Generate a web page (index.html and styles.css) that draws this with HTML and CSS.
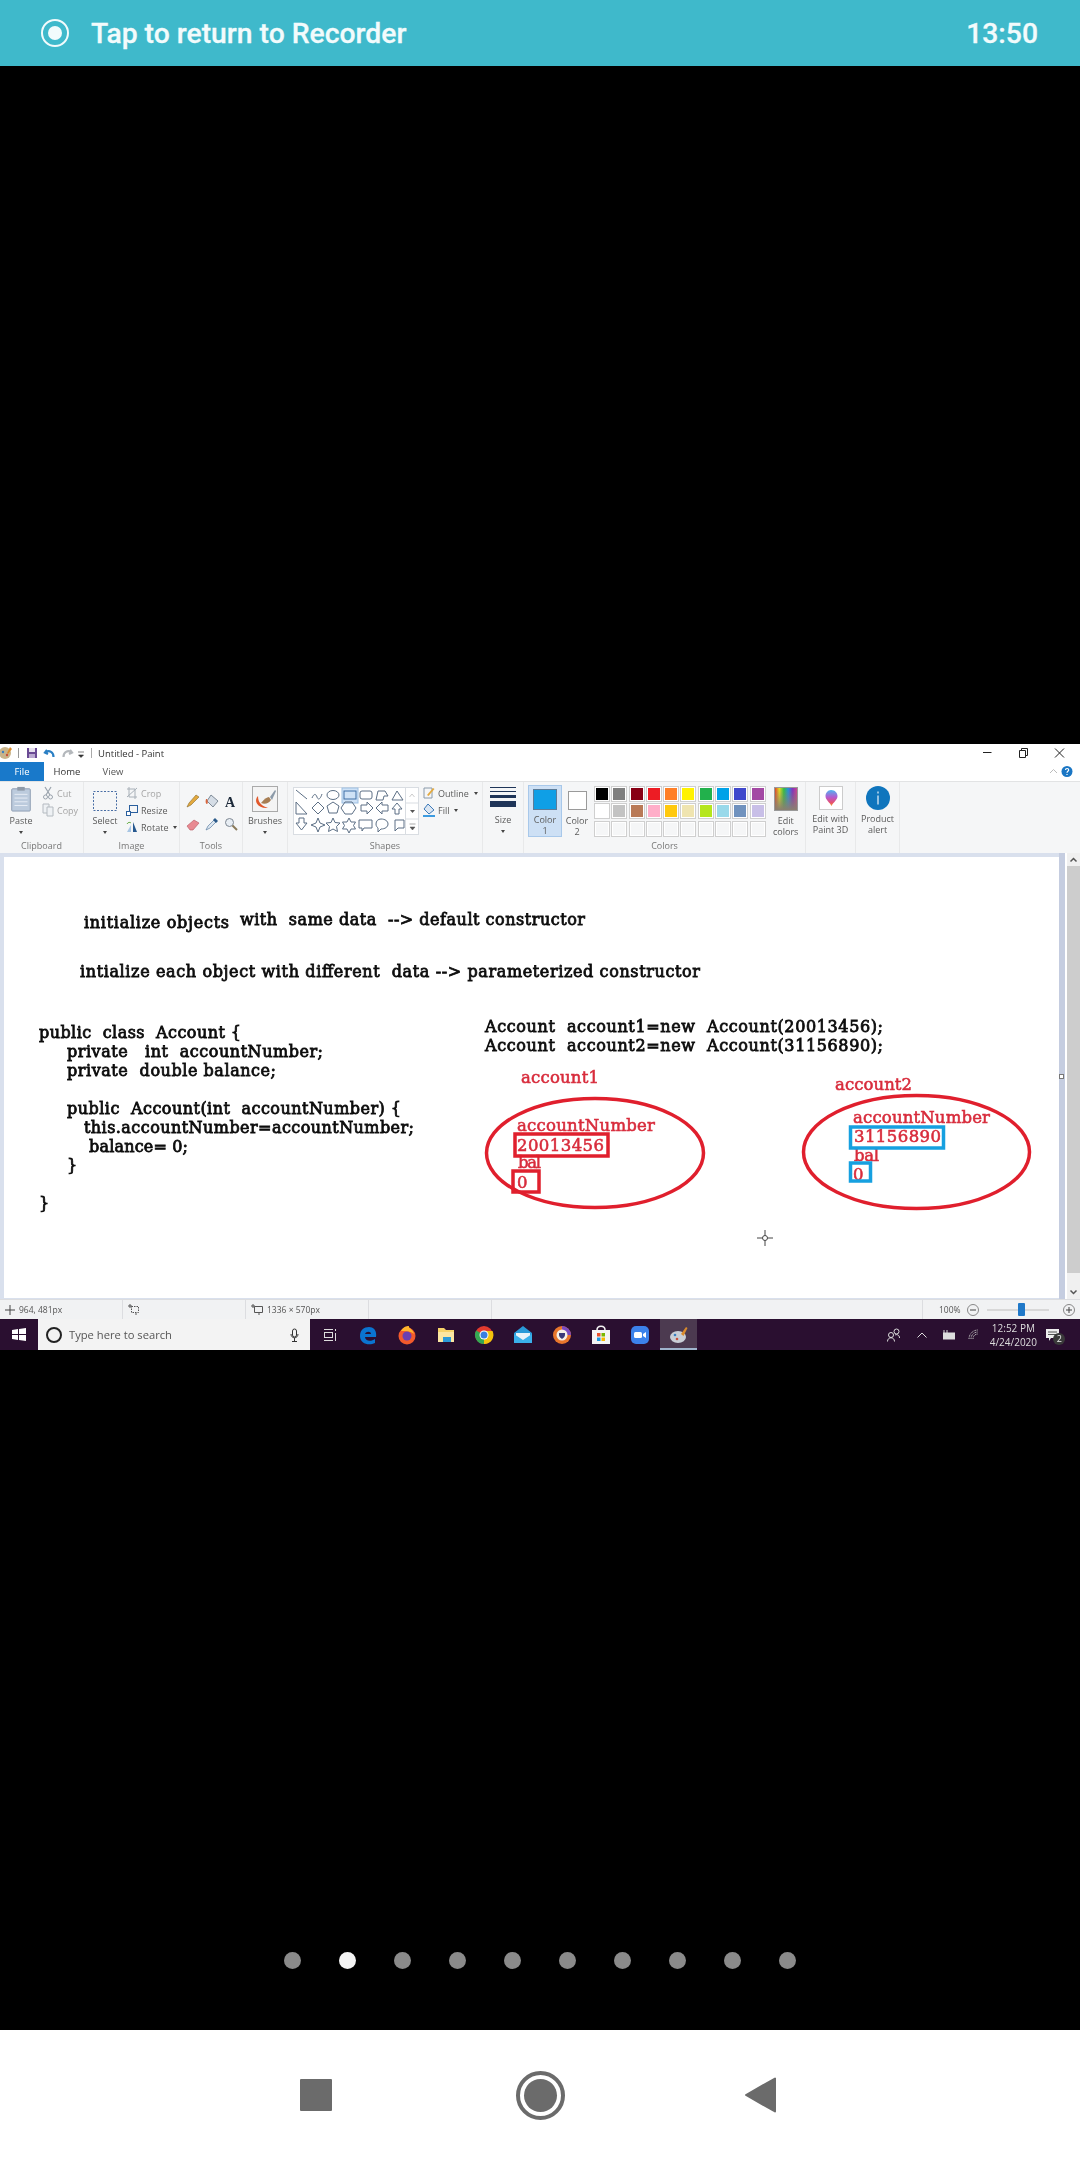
FILE: index.html
```html
<!DOCTYPE html>
<html lang="en">
<head>
    <meta charset="UTF-8">
    <title>Recorder</title>
    <link rel="stylesheet" href="styles.css">
</head>
<body>
    <header class="return-bar">
        <span class="rec-icon"><span class="rec-dot"></span></span>
        <span class="return-text">Tap to return to Recorder</span>
        <span class="return-time">13:50</span>
    </header>

    <div class="black-gap"></div>

    <section class="paint">
        <div class="title-bar">
            <svg class="qa-icons" width="96" height="18" viewBox="0 0 96 18">
                <circle cx="5" cy="9" r="6" fill="#c9b48a"/><circle cx="3" cy="8" r="1.2" fill="#3a7fc1"/><circle cx="7" cy="11" r="1.2" fill="#c9503c"/>
                <path d="M10 3l2 2-4 5-1-1z" fill="#d98a2b"/>
                <path d="M18.500 4v10" stroke="#999"/>
                <rect x="27" y="4" width="10" height="10" fill="#6a4a94"/><rect x="29" y="4" width="6" height="4" fill="#e6e0ee"/><rect x="29" y="10" width="6" height="4" fill="#b9a8d0"/>
                <path d="M47 6l-2 2.500 3 1.500M45.500 8c4-2 8 0 8 5" fill="none" stroke="#2a7fc4" stroke-width="2.200"/>
                <path d="M70 6l2 2.500-3 1.500M71.500 8c-4-2-8 0-8 5" fill="none" stroke="#b4b8bc" stroke-width="2.200"/>
                <path d="M78 8h6M78.500 11h5l-2.500 2.500z" fill="#333" stroke="#333" stroke-width=".6"/>
                <path d="M91.500 4v10" stroke="#aaa"/>
            </svg>
            <span class="title-text">Untitled - Paint</span>
            <svg class="window-controls" width="90" height="18" viewBox="0 0 90 18">
                <path d="M3 8.500h8.500" stroke="#222"/>
                <path d="M39.500 6.500h6v7h-6zM41.500 6.500v-2h6v7h-2" fill="none" stroke="#222"/>
                <path d="M75 4.500l9 9M84 4.500l-9 9" stroke="#222"/>
            </svg>
        </div>

        <div class="tab-row">
            <span class="tab tab-file">File</span>
            <span class="tab tab-home">Home</span>
            <span class="tab tab-view">View</span>
            <svg class="ribbon-help" width="30" height="19" viewBox="0 0 30 19">
                <path d="M0 11l3.500-3.500L7 11" fill="none" stroke="#bbb"/>
                <circle cx="17" cy="9.500" r="5.500" fill="#1a76c4"/>
                <path d="M15.500 8c0-2 3.200-2 3.200 0 0 1.200-1.700 1.300-1.700 2.700M17 12v1" fill="none" stroke="#fff" stroke-width="1.200"/>
            </svg>
        </div>

        <div class="ribbon">
            <div class="group group-clipboard">
                <div class="group-body">
                    <div class="big-tool big-paste">
                        <svg width="24" height="26" viewBox="0 0 24 28">
                            <rect x="2" y="3" width="20" height="24" rx="1" fill="#bccbdd" stroke="#8a9bb0"/>
                            <rect x="8" y="1" width="8" height="4" fill="#8f9aa8"/>
                            <path d="M5 9h14M5 13h14M5 17h14M5 21h14" stroke="#e8eef5"/>
                        </svg>
                        <span class="big-label">Paste</span>
                        <span class="caret"></span>
                    </div>
                    <ul class="small-tools small-disabled">
                        <li>
                            <svg width="12" height="14" viewBox="0 0 12 14"><path d="M3 1l5 8M9 1L4 9" stroke="#9aa3ad" stroke-width="1.200"/><circle cx="3.500" cy="11" r="2" fill="none" stroke="#9aa3ad"/><circle cx="8.500" cy="11" r="2" fill="none" stroke="#9aa3ad"/></svg>
                            <span>Cut</span>
                        </li>
                        <li>
                            <svg width="12" height="14" viewBox="0 0 12 14"><path d="M1 1h6v9H1z" fill="#eef1f4" stroke="#b4bac0"/><path d="M5 4h6v9H5z" fill="#eef1f4" stroke="#b4bac0"/></svg>
                            <span>Copy</span>
                        </li>
                    </ul>
                </div>
                <div class="group-label">Clipboard</div>
            </div>

            <div class="group group-image">
                <div class="group-body">
                    <div class="big-tool big-select">
                        <svg width="26" height="22" viewBox="0 0 26 22"><rect x="1.500" y="1.500" width="23" height="19" fill="none" stroke="#4a6fa5" stroke-dasharray="2 1.500"/></svg>
                        <span class="big-label">Select</span>
                        <span class="caret"></span>
                    </div>
                    <ul class="small-tools">
                        <li class="tool-off">
                            <svg width="12" height="14" viewBox="0 0 12 14"><path d="M3 1v10h8M1 3h8v10M1 11l10-9" fill="none" stroke="#a8b0b8"/></svg>
                            <span>Crop</span>
                        </li>
                        <li>
                            <svg width="12" height="14" viewBox="0 0 12 14"><rect x="3.500" y="2.500" width="8" height="7" fill="none" stroke="#2a5f9e"/><rect x=".5" y="8.500" width="4" height="4" fill="#fff" stroke="#2a5f9e"/></svg>
                            <span>Resize</span>
                        </li>
                        <li>
                            <svg width="12" height="14" viewBox="0 0 12 14"><path d="M7 2l4 10H7z" fill="#27598f"/><path d="M5 12H1l4-7z" fill="#a8c6e4"/><path d="M1 4c1-2 3-2 4-1" fill="none" stroke="#6bb04a"/></svg>
                            <span>Rotate</span><span class="caret caret-inline"></span>
                        </li>
                    </ul>
                </div>
                <div class="group-label">Image</div>
            </div>

            <div class="group group-tools">
                <div class="group-body">
                    <div class="tool-grid">
                        <svg width="14" height="14" viewBox="0 0 14 14"><path d="M1 13l2-4 7-8 3 2-8 8z" fill="#e3a93e" stroke="#8a6a2a" stroke-width=".6"/></svg>
                        <svg width="14" height="14" viewBox="0 0 14 14"><path d="M6 1l7 6-5 6-6-6z" fill="#d5dde6" stroke="#7e8a97"/><path d="M1 5c-1 3 0 5 1 5s1-3 0-5z" fill="#d9653c"/></svg>
                        <svg width="14" height="14" viewBox="0 0 14 14"><text class="tool-a" x="1" y="12.500">A</text></svg>
                        <svg width="14" height="14" viewBox="0 0 14 14"><path d="M1 9l7-6 5 3-6 7H4z" fill="#e88a92" stroke="#b5565f" stroke-width=".6"/></svg>
                        <svg width="14" height="14" viewBox="0 0 14 14"><path d="M1 13l2-4 6-6 2 2-6 6z" fill="#dce6f0" stroke="#5d7fa3" stroke-width=".7"/><path d="M8 3l2-2 3 3-2 2z" fill="#2b5a8a"/></svg>
                        <svg width="14" height="14" viewBox="0 0 14 14"><circle cx="5.500" cy="5.500" r="4" fill="#e8eef4" stroke="#7d8792"/><path d="M8.500 8.500l4.500 4.500" stroke="#8a7a5a" stroke-width="2"/></svg>
                    </div>
                </div>
                <div class="group-label">Tools</div>
            </div>

            <div class="group group-brushes">
                <div class="group-body">
                    <div class="big-tool big-brushes">
                        <svg width="26" height="26" viewBox="0 0 26 26">
                            <rect x=".5" y=".5" width="25" height="25" fill="#f4f4f4" stroke="#aaa"/>
                            <path d="M6 10c-5 5 0 13 10 12-5-2-10-4-10-12z" fill="#e2582a"/>
                            <path d="M9 17c3-4 6-6 8-6l2 3c-2 3-6 5-10 3z" fill="#a77d52"/>
                            <path d="M18 11l5-7 1 1-4 9z" fill="#8c9aa8"/>
                        </svg>
                        <span class="big-label">Brushes</span>
                        <span class="caret"></span>
                    </div>
                </div>
                <div class="group-label">&nbsp;</div>
            </div>

            <div class="group group-shapes">
                <div class="group-body">
                    <svg class="shape-box" width="126" height="48" viewBox="0 0 126 48">
                        <rect x=".5" y=".5" width="125" height="47" fill="#fff" stroke="#d9dde2"/>
                        <path d="M112.500 1v46M112.500 16h13M112.500 32h13" stroke="#d9dde2"/>
                        <rect x="49" y="1" width="16" height="15" fill="#cfe2f6" stroke="#9dbfe2"/>
                        <g fill="none" stroke="#5c6f85">
                            <path d="M3 3l11 9M19 11c2-5 4-4 5-1s3 3 5-3"/>
                            <ellipse cx="40" cy="8" rx="6" ry="4.500"/>
                            <rect x="51" y="4" width="12" height="8" stroke="#3e6ea5"/>
                            <rect x="67" y="4" width="12" height="8" rx="2"/>
                            <path d="M83 13l2-9h7l3 5h-4l-1 4zM99 13l5-9 6 9z"/>
                            <path d="M3 27V15l11 12zM25 15l6 6-6 6-6-6zM40 15l6 4-2 7h-8l-2-7zM52 15h7l4 6-4 6h-7l-4-6zM68 18h6v-3l6 6-6 6v-3h-6zM95 18h-6v-3l-6 6 6 6v-3h6zM99 22l5-6 5 6h-3v5h-4v-5z"/>
                            <path d="M6 31h5v5h3l-5.500 7L3 36h3zM25 31l2 5 5 2-5 2-2 5-2-5-5-2 5-2zM40 31l2 4.500 5 .5-3.500 3.500 1 5-4.500-2.500-4.500 2.500 1-5L33 36l5-.500zM56 31l2 4h4.500l-2 3.500 2 3.500H58l-2 4-2-4h-4.500l2-3.500-2-3.500H54z"/>
                            <path d="M66 33h13v8h-8l-2 3v-3h-3zM88 32c4 0 7 2 7 5s-3 5-7 5l-3 3v-4c-1-1-2-2-2-4 0-3 2-5 5-5zM102 33h9v8h-6l-3 3z"/>
                        </g>
                        <path d="M116.500 10l2.500-3 2.500 3" fill="none" stroke="#ccc"/>
                        <path d="M117 23h5l-2.500 3z" fill="#555"/>
                        <path d="M116.500 37h6M117 40h5l-2.500 3z" fill="#555" stroke="#555" stroke-width=".5"/>
                    </svg>
                    <ul class="small-tools shape-opts">
                        <li>
                            <svg width="12" height="14" viewBox="0 0 12 14"><path d="M1 2h8v10H1z" fill="none" stroke="#8a9aaa"/><path d="M4 9l6-7 1.500 1-6 7z" fill="#e3a93e"/></svg>
                            <span>Outline</span><span class="caret caret-inline"></span>
                        </li>
                        <li>
                            <svg width="12" height="14" viewBox="0 0 12 14"><path d="M5 1l6 6-5 4-5-5z" fill="#dbe6f2" stroke="#3c79b8"/><path d="M0 13h12" stroke="#3c9be0" stroke-width="2"/></svg>
                            <span>Fill</span><span class="caret caret-inline"></span>
                        </li>
                    </ul>
                </div>
                <div class="group-label">Shapes</div>
            </div>

            <div class="group group-size">
                <div class="group-body">
                    <div class="big-tool big-size">
                        <div class="size-lines">
                            <span class="size-1"></span><span class="size-2"></span><span class="size-3"></span><span class="size-4"></span>
                        </div>
                        <span class="big-label">Size</span>
                        <span class="caret"></span>
                    </div>
                </div>
                <div class="group-label">&nbsp;</div>
            </div>

            <div class="group group-colors">
                <div class="group-body">
                    <div class="color-btn color-btn-active">
                        <span class="color-swatch-big"></span>
                        <span class="big-label">Color<br>1</span>
                    </div>
                    <div class="color-btn color-btn-two">
                        <span class="color-swatch-small"></span>
                        <span class="big-label">Color<br>2</span>
                    </div>
                    <div class="palette">
                        <span class="c1"></span><span class="c2"></span><span class="c3"></span><span class="c4"></span><span class="c5"></span>
                        <span class="c6"></span><span class="c7"></span><span class="c8"></span><span class="c9"></span><span class="c10"></span>
                        <span class="c11"></span><span class="c12"></span><span class="c13"></span><span class="c14"></span><span class="c15"></span>
                        <span class="c16"></span><span class="c17"></span><span class="c18"></span><span class="c19"></span><span class="c20"></span>
                        <span></span><span></span><span></span><span></span><span></span>
                        <span></span><span></span><span></span><span></span><span></span>
                    </div>
                    <div class="color-btn color-btn-edit">
                        <span class="rainbow"></span>
                        <span class="big-label">Edit<br>colors</span>
                    </div>
                </div>
                <div class="group-label">Colors</div>
            </div>

            <div class="group group-3d">
                <div class="group-body">
                    <div class="big-tool">
                        <svg width="24" height="24" viewBox="0 0 24 24">
                            <rect x=".5" y=".5" width="23" height="23" fill="#fff" stroke="#ccc"/>
                            <defs><linearGradient id="drop" x1="0" y1="0" x2="0" y2="1"><stop offset="0" stop-color="#4fb4f0"/><stop offset=".45" stop-color="#b55ad0"/><stop offset=".8" stop-color="#e8506a"/><stop offset="1" stop-color="#f0a030"/></linearGradient></defs>
                            <path d="M12 4c4 0 6.500 3 6.500 6 0 4-4 6-6 10-2-4-6-6-6-10 0-3 2.500-6 5.500-6z" fill="url(#drop)"/>
                        </svg>
                        <span class="big-label">Edit with<br>Paint 3D</span>
                    </div>
                </div>
                <div class="group-label">&nbsp;</div>
            </div>

            <div class="group group-alert">
                <div class="group-body">
                    <div class="big-tool">
                        <svg width="24" height="24" viewBox="0 0 24 24">
                            <circle cx="12" cy="12" r="12" fill="#0f75bd"/>
                            <path d="M12 9.500v9M12 5.500v2" stroke="#dbeaf6" stroke-width="1.300"/>
                        </svg>
                        <span class="big-label">Product<br>alert</span>
                    </div>
                </div>
                <div class="group-label">&nbsp;</div>
            </div>
        </div>

        <div class="workspace">
            <div class="work-area">
                <svg class="drawing" width="1055" height="441" viewBox="4 857 1055 441">
                    <text class="ink" x="84" y="928" textLength="145">initialize objects</text>
                    <text class="ink" x="240" y="925" textLength="345">with  same data  --&gt; default constructor</text>
                    <text class="ink" x="80" y="977" textLength="620">intialize each object with different  data --&gt; parameterized constructor</text>

                    <text class="ink" x="39" y="1038" textLength="202">public  class  Account {</text>
                    <text class="ink" x="67" y="1057" textLength="256">private   int  accountNumber;</text>
                    <text class="ink" x="67" y="1076" textLength="209">private  double balance;</text>
                    <text class="ink" x="67" y="1114" textLength="334">public  Account(int  accountNumber) {</text>
                    <text class="ink" x="84" y="1133" textLength="330">this.accountNumber=accountNumber;</text>
                    <text class="ink" x="89" y="1152" textLength="99">balance= 0;</text>
                    <text class="ink" x="67" y="1171">}</text>
                    <text class="ink" x="39" y="1209">}</text>

                    <text class="ink" x="485" y="1032" textLength="398">Account  account1=new  Account(20013456);</text>
                    <text class="ink" x="485" y="1051" textLength="398">Account  account2=new  Account(31156890);</text>

                    <g class="red-ink">
                        <text x="521" y="1083" textLength="78">account1</text>
                        <text x="517" y="1131" textLength="138">accountNumber</text>
                        <text x="517" y="1151" textLength="87">20013456</text>
                        <text x="518" y="1168" textLength="23">bal</text>
                        <text x="517" y="1188">0</text>
                        <text x="835" y="1090" textLength="77">account2</text>
                        <text x="853" y="1123" textLength="137">accountNumber</text>
                        <text x="854" y="1142" textLength="87">31156890</text>
                        <text x="854" y="1161" textLength="25">bal</text>
                        <text x="853" y="1180">0</text>
                    </g>

                    <g fill="none" stroke-width="3.500">
                        <ellipse cx="595" cy="1153" rx="108.500" ry="54.500" stroke="#e01f2d"/>
                        <ellipse cx="916.500" cy="1152" rx="113" ry="56.500" stroke="#e01f2d"/>
                        <rect x="515" y="1134" width="93" height="22" stroke="#e01f2d"/>
                        <rect x="513" y="1171" width="26" height="21" stroke="#e01f2d"/>
                        <rect x="850.500" y="1127" width="93" height="21" stroke="#16a0e0"/>
                        <rect x="850.500" y="1163" width="20" height="18" stroke="#16a0e0"/>
                    </g>

                    <path d="M757 1238h16M765 1230v16" stroke="#444"/>
                    <circle cx="765" cy="1238" r="2.500" fill="#fff" stroke="#444"/>
                </svg>
                <div class="canvas-edge"><span class="scroll-grip"></span></div>
            </div>
            <div class="scrollbar">
                <svg class="scroll-arrow" width="13" height="12" viewBox="0 0 13 12"><path d="M3.500 7.500l3-3 3 3" fill="none" stroke="#555" stroke-width="1.500"/></svg>
                <span class="scroll-thumb"></span>
                <svg class="scroll-arrow" width="13" height="12" viewBox="0 0 13 12"><path d="M3.500 4.500l3 3 3-3" fill="none" stroke="#555" stroke-width="1.500"/></svg>
            </div>
        </div>

        <div class="status-bar">
            <div class="status-cell status-pos">
                <svg width="10" height="10" viewBox="0 0 10 10"><path d="M5 0v10M0 5h10" stroke="#444"/></svg>
                <span>964, 481px</span>
            </div>
            <div class="status-cell">
                <svg width="11" height="11" viewBox="0 0 11 11"><path d="M3.500 2.500h7v6h-7z" fill="none" stroke="#555" stroke-dasharray="1.500 1"/><path d="M2 0v4M0 2h4M8 11V9" stroke="#555"/></svg>
            </div>
            <div class="status-cell">
                <svg width="12" height="11" viewBox="0 0 12 11"><path d="M3.500 2.500h8v6h-8z" fill="none" stroke="#555"/><path d="M2 0v4M0 2h4M8 11V9" stroke="#555"/></svg>
                <span>1336 × 570px</span>
            </div>
            <div class="status-cell"></div>
            <div class="status-fill"></div>
            <div class="status-zoom">
                <span>100%</span>
                <svg width="12" height="12" viewBox="0 0 12 12"><circle cx="6" cy="6" r="5.500" fill="none" stroke="#888"/><path d="M3 6h6" stroke="#444"/></svg>
                <div class="zoom-track"><span class="zoom-thumb"></span></div>
                <svg width="12" height="12" viewBox="0 0 12 12"><circle cx="6" cy="6" r="5.500" fill="none" stroke="#888"/><path d="M3 6h6M6 3v6" stroke="#444"/></svg>
            </div>
        </div>

        <div class="taskbar">
            <svg class="win-logo" width="14" height="13" viewBox="0 0 14 13"><path d="M0 2l6-1v5H0zM7 1l7-1v6H7zM0 7h6v5l-6-1zM7 7h7v6l-7-1z" fill="#fff"/></svg>
            <div class="search-box">
                <span class="cortana"></span>
                <span class="search-text">Type here to search</span>
                <svg class="mic" width="9" height="14" viewBox="0 0 9 14"><rect x="2.500" y="1" width="4" height="8" rx="2" fill="none" stroke="#333"/><path d="M1 6c0 5 7 5 7 0M4.500 10v3M2 13.500h5" fill="none" stroke="#333"/></svg>
            </div>
            <svg class="task-view" width="14" height="14" viewBox="0 0 14 14"><path d="M1 1.500h9M1 12.500h9" stroke="#ddd"/><rect x="1.500" y="4.500" width="8" height="5" fill="none" stroke="#ddd"/><path d="M12.500 1v2M12.500 5v8" stroke="#ddd"/></svg>
            <div class="task-icons">
                <svg width="20" height="20" viewBox="0 0 20 20"><path d="M2 11C2 5 6 2 11 2c5 0 8 4 7 10H7c0 4 6 5 10 2v4c-6 3-15 1-15-7zm5-2h6c0-3-5-3-6 0z" fill="#0a74d0"/></svg>
                <svg width="20" height="20" viewBox="0 0 20 20"><circle cx="10" cy="11" r="8.500" fill="#f25a2c"/><path d="M4 6c2-4 5-5 8-5-1 2 4 3 5 8-3-3-9-3-13-3z" fill="#ffb52c"/><circle cx="10" cy="11" r="4.500" fill="#6a3fb0"/></svg>
                <svg width="20" height="20" viewBox="0 0 20 20"><path d="M2 3h6l2 2h8v12H2z" fill="#f6d36a"/><rect x="2" y="7" width="16" height="10" fill="#fbe6a2"/><rect x="7" y="12" width="8" height="5" fill="#2b9ad8"/></svg>
                <svg width="20" height="20" viewBox="0 0 20 20"><circle cx="10" cy="10" r="9" fill="#e33b2e"/><path d="M10 10L2.200 5.500A9 9 0 0 0 10 19z" fill="#34a853"/><path d="M10 6h8.500A9 9 0 0 1 10 19z" fill="#f4c20d"/><circle cx="10" cy="10" r="4.500" fill="#fff"/><circle cx="10" cy="10" r="3.500" fill="#3a7fe0"/></svg>
                <svg width="20" height="20" viewBox="0 0 20 20"><path d="M1 8l9-7 9 7v10H1z" fill="#2a9ad8"/><path d="M3 8h14v5l-7 4-7-4z" fill="#e8f3fa"/><path d="M1 9l9 6 9-6v9H1z" fill="#3ab0ea"/></svg>
                <svg width="20" height="20" viewBox="0 0 20 20"><circle cx="10" cy="10" r="9" fill="#e8762c"/><path d="M10 1a9 9 0 0 1 9 9h-9z" fill="#7a4ac0"/><circle cx="10" cy="10" r="5.500" fill="#f5f0e8"/><path d="M7 8h6v2c0 2-2 3-3 4-1-1-3-2-3-4z" fill="#3a3a7a"/></svg>
                <svg width="20" height="20" viewBox="0 0 20 20"><rect x="1" y="5" width="18" height="14" fill="#f4f4f4"/><path d="M6 5c0-5 8-5 8 0" fill="none" stroke="#f4f4f4" stroke-width="1.500"/><rect x="6" y="8" width="3.500" height="3.500" fill="#e8512c"/><rect x="10.500" y="8" width="3.500" height="3.500" fill="#7ab800"/><rect x="6" y="12.500" width="3.500" height="3.500" fill="#1a9ae0"/><rect x="10.500" y="12.500" width="3.500" height="3.500" fill="#f8b800"/></svg>
                <span class="task-running">
                    <svg width="20" height="20" viewBox="0 0 20 20"><rect x="1" y="1" width="18" height="18" rx="5" fill="#3c82ea"/><rect x="4" y="7" width="8" height="6" rx="1.500" fill="#fff"/><path d="M13 9l3-2v6l-3-2z" fill="#fff"/></svg>
                </span>
                <span class="task-active">
                    <svg width="20" height="20" viewBox="0 0 20 20"><ellipse cx="9" cy="12" rx="8" ry="6" fill="#c9ced6"/><circle cx="6" cy="10" r="1.300" fill="#3a7fc1"/><circle cx="8" cy="14" r="1.300" fill="#c9503c"/><path d="M12 9l5-7 1.500 1-4 8z" fill="#d98a2b"/></svg>
                </span>
            </div>
            <div class="tray">
                <svg class="tray-people" width="13" height="14" viewBox="0 0 13 14"><circle cx="4" cy="7" r="2.500" fill="none" stroke="#ddd"/><circle cx="9.500" cy="3.500" r="2.500" fill="none" stroke="#ddd"/><path d="M.5 13.500c0-5 7-5 7 0M8 7c2-1 4.500 0 4.500 3" fill="none" stroke="#ddd"/></svg>
                <svg class="tray-chevron" width="10" height="6" viewBox="0 0 10 6"><path d="M.5 5.500L5 1l4.500 4.500" fill="none" stroke="#ddd"/></svg>
                <svg class="tray-battery" width="13" height="10" viewBox="0 0 13 10"><rect x="1.500" y="3" width="11" height="6" fill="#ddd" stroke="#ddd"/><path d="M2 0v3M5 0v3" stroke="#ddd"/></svg>
                <svg class="tray-wifi" width="11" height="11" viewBox="0 0 11 11"><path d="M1 10c0-5 4-9 9-9M3 10c0-4 3-7 7-7M5 10c0-3 2-5 5-5" fill="none" stroke="#bbb" stroke-dasharray="1 .6"/></svg>
                <div class="clock"><span>12:52 PM</span><span>4/24/2020</span></div>
                <div class="notif">
                    <svg width="13" height="12" viewBox="0 0 13 12"><path d="M0 0h13v9H5l-2 3V9H0z" fill="#eee"/><path d="M2 3h9M2 5.500h9" stroke="#555"/></svg>
                    <span class="notif-count">2</span>
                </div>
            </div>
        </div>
    </section>

    <div class="pager">
        <span class="dot"></span>
        <span class="dot dot-on"></span>
        <span class="dot"></span>
        <span class="dot"></span>
        <span class="dot"></span>
        <span class="dot"></span>
        <span class="dot"></span>
        <span class="dot"></span>
        <span class="dot"></span>
        <span class="dot"></span>
    </div>

    <nav class="nav-bar">
        <span class="nav-square"></span>
        <span class="nav-home"><span class="nav-home-dot"></span></span>
        <svg class="nav-back" width="31" height="36" viewBox="0 0 31 36">
            <path d="M30 1.500v33L1 18z" fill="#6b6b6b" stroke="#6b6b6b" stroke-width="2" stroke-linejoin="round"/>
        </svg>
    </nav>
</body>
</html>
```

FILE: styles.css
```css
body {
    margin: 0;
    width: 1080px;
    height: 2160px;
    overflow: hidden;
    display: flex;
    flex-direction: column;
    background-color: #000;
    font-family: 'Open Sans', sans-serif;
}

ul {
    list-style: none;
    margin: 0;
    padding: 0;
}

svg {
    display: block;
    flex-shrink: 0;
}

/* recorder bar */
.return-bar {
    height: 66px;
    display: flex;
    align-items: center;
    padding: 0 42px 0 41px;
    background-color: #3fb9cb;
    color: #f2fbfc;
    font-family: Roboto, sans-serif;
    font-weight: 500;
    font-size: 28.3px;
    -webkit-text-stroke: 0.3px #f2fbfc;
}

.rec-icon {
    width: 28px;
    height: 28px;
    box-sizing: border-box;
    border: 2px solid #f2fbfc;
    border-radius: 50%;
    display: flex;
    align-items: center;
    justify-content: center;
}

.rec-dot {
    width: 14px;
    height: 14px;
    border-radius: 50%;
    background-color: #f2fbfc;
}

.return-text {
    margin-left: 22px;
}

.return-time {
    margin-left: auto;
}

.black-gap {
    height: 678px;
}

/* paint window */
.paint {
    height: 606px;
    display: flex;
    flex-direction: column;
    background-color: #fff;
    color: #5a5a5a;
    font-size: 9px;
    filter: blur(0.35px);
}

.title-bar {
    height: 18px;
    display: flex;
    align-items: center;
}

.title-text {
    margin-left: 2px;
    font-size: 9.5px;
    color: #333;
}

.window-controls {
    margin-left: auto;
    margin-right: 10px;
}

.tab-row {
    height: 19px;
    display: flex;
    align-items: center;
}

.tab {
    height: 19px;
    line-height: 19px;
    text-align: center;
    font-size: 9.5px;
}

.tab-file {
    width: 44px;
    background-color: #1979ca;
    color: #fff;
}

.tab-home {
    width: 46px;
    color: #333;
}

.tab-view {
    width: 46px;
    color: #555;
}

.ribbon-help {
    margin-left: auto;
}

.ribbon {
    height: 72px;
    display: flex;
    box-sizing: border-box;
    background-color: #f5f6f7;
    border-top: 1px solid #e2e3e4;
}

.group {
    box-sizing: border-box;
    display: flex;
    flex-direction: column;
    border-right: 1px solid #e8e9ea;
}

.group-body {
    flex: 1;
    display: flex;
    padding-top: 4px;
}

.group-label {
    height: 13px;
    line-height: 12px;
    text-align: center;
    color: #777;
}

.group-clipboard { width: 84px; }
.group-image { width: 96px; }
.group-tools { width: 63px; }
.group-brushes { width: 45px; }
.group-shapes { width: 195px; }
.group-size { width: 41px; }
.group-colors { width: 282px; }
.group-3d { width: 50px; }
.group-alert { width: 44px; }

.big-tool {
    display: flex;
    flex-direction: column;
    align-items: center;
    flex: 1;
    line-height: 11px;
}

.big-paste {
    flex: 0 0 42px;
}

.big-select {
    flex: 0 0 42px;
    padding-top: 4px;
}

.big-label {
    margin-top: 3px;
    text-align: center;
    white-space: nowrap;
}

.caret {
    width: 0;
    height: 0;
    margin-top: 5px;
    border-left: 2.5px solid transparent;
    border-right: 2.5px solid transparent;
    border-top: 3px solid #444;
}

.caret-inline {
    margin: 0 0 0 2px;
}

.small-tools {
    display: flex;
    flex-direction: column;
    gap: 3px;
}

.small-tools li {
    height: 14px;
    display: flex;
    align-items: center;
    gap: 3px;
}

.small-disabled li,
.tool-off {
    color: #a5a5a5;
}

.tool-grid {
    display: grid;
    grid-template-columns: repeat(3, 14px);
    grid-auto-rows: 14px;
    gap: 9px 5px;
    padding: 8px 0 0 6px;
}

.tool-a {
    font-family: 'Liberation Serif', serif;
    font-weight: 700;
    font-size: 14px;
    fill: #1d2a3a;
}

.shape-box {
    margin: 1px 4px 0 5px;
}

.size-lines {
    width: 26px;
    height: 24px;
    display: flex;
    flex-direction: column;
    gap: 3px;
    padding-top: 1px;
}

.size-lines span {
    display: block;
    background-color: #1f3558;
}

.size-1 { height: 1px; }
.size-2 { height: 1px; }
.size-3 { height: 3px; }
.size-4 { height: 6px; }

.group-colors .group-body {
    padding-left: 4px;
    padding-top: 3px;
}

.color-btn {
    display: flex;
    flex-direction: column;
    align-items: center;
    line-height: 11px;
}

.color-btn .big-label {
    margin-top: 0;
}

.color-btn-active {
    box-sizing: border-box;
    width: 34px;
    height: 52px;
    padding-top: 3px;
    background-color: #cde0f5;
    border: 1px solid #a8c8ea;
}

.color-swatch-big {
    width: 22px;
    height: 22px;
    margin-bottom: 4px;
    background-color: #0f9fe6;
    border: 1px solid #5c7c99;
}

.color-btn-two {
    width: 30px;
    padding-top: 6px;
}

.color-swatch-small {
    box-sizing: border-box;
    width: 19px;
    height: 19px;
    margin-bottom: 5px;
    background-color: #fff;
    border: 1px solid #9a9a9a;
}

.palette {
    display: grid;
    grid-template-columns: repeat(10, 16px);
    grid-auto-rows: 16px;
    gap: 1.3px;
    margin: 1px 0 0 2px;
}

.palette span {
    box-sizing: border-box;
    border: 1px solid #cfcfcf;
    outline: 1px solid #fff;
    outline-offset: -2px;
    background-color: #f5f6f7;
}

.palette .c1 { background-color: #000; }
.palette .c2 { background-color: #7f7f7f; }
.palette .c3 { background-color: #880015; }
.palette .c4 { background-color: #ed1c24; }
.palette .c5 { background-color: #ff7f27; }
.palette .c6 { background-color: #fff200; }
.palette .c7 { background-color: #22b14c; }
.palette .c8 { background-color: #00a2e8; }
.palette .c9 { background-color: #3f48cc; }
.palette .c10 { background-color: #a349a4; }
.palette .c11 { background-color: #fff; }
.palette .c12 { background-color: #c3c3c3; }
.palette .c13 { background-color: #b97a57; }
.palette .c14 { background-color: #ffaec9; }
.palette .c15 { background-color: #ffc90e; }
.palette .c16 { background-color: #efe4b0; }
.palette .c17 { background-color: #b5e61d; }
.palette .c18 { background-color: #99d9ea; }
.palette .c19 { background-color: #7092be; }
.palette .c20 { background-color: #c8bfe7; }

.color-btn-edit {
    width: 32px;
    margin-left: 4px;
}

.rainbow {
    width: 22px;
    height: 22px;
    margin: 2px 0 4px;
    border: 1px solid #999;
    background: linear-gradient(to bottom, rgba(255, 255, 255, 0), #8a7f70), linear-gradient(to right, #e0402a, #e8e020, #30c040, #2090e0, #8030c0, #d04090);
}

/* canvas */
.workspace {
    height: 446px;
    display: flex;
    background-color: #fff;
}

.work-area {
    display: flex;
    box-sizing: border-box;
    width: 1065px;
    padding: 4px 0 0 4px;
    background-color: #d9e0ed;
}

.drawing {
    background-color: #fff;
}

.ink {
    font-family: 'DejaVu Serif', serif;
    font-size: 16px;
    fill: #0d0d0d;
    stroke: #0d0d0d;
    stroke-width: 0.8px;
    white-space: pre;
}

.red-ink text {
    font-family: 'DejaVu Serif', serif;
    font-size: 16.5px;
    fill: #d82c3c;
    stroke: #d82c3c;
    stroke-width: 0.55px;
    white-space: pre;
}

.canvas-edge {
    width: 6px;
    margin-top: -4px;
    display: flex;
    align-items: center;
    background-color: #c5cde0;
}

.scroll-grip {
    width: 5px;
    height: 5px;
    box-sizing: border-box;
    background-color: #fff;
    border: 1px solid #777;
}

.scrollbar {
    width: 13px;
    margin-left: 2px;
    display: flex;
    flex-direction: column;
    background-color: #f0f0f0;
}

.scroll-arrow {
    margin-top: 1px;
}

.scroll-thumb {
    height: 407px;
    background-color: #cdcdcd;
}

.scroll-thumb + .scroll-arrow {
    margin-top: auto;
    margin-bottom: 1px;
}

/* status bar */
.status-bar {
    height: 20px;
    display: flex;
    align-items: center;
    box-sizing: border-box;
    background-color: #f1f2f3;
    border-top: 1px solid #dcdde0;
    color: #555;
    font-size: 8.5px;
}

.status-cell {
    box-sizing: border-box;
    width: 123px;
    height: 19px;
    display: flex;
    align-items: center;
    gap: 4px;
    padding-left: 5px;
    border-right: 1px solid #dcdde0;
}

.status-fill {
    flex: 1;
}

.status-zoom {
    box-sizing: border-box;
    width: 158px;
    height: 19px;
    display: flex;
    align-items: center;
    padding: 0 5px 0 16px;
    border-left: 1px solid #dcdde0;
}

.zoom-track {
    flex: 1;
    height: 2px;
    margin: 0 8px;
    position: relative;
    background-color: #d8d8d8;
}

.status-zoom svg {
    margin-left: 6px;
}

.zoom-thumb {
    position: absolute;
    left: 31px;
    top: -6px;
    width: 7px;
    height: 13px;
    background-color: #1f78c8;
    border-radius: 1px;
}

/* windows taskbar */
.taskbar {
    height: 31px;
    display: flex;
    align-items: center;
    background-color: #2a0f30;
    color: #ddd;
}

.win-logo {
    margin: 0 12px 0 12px;
}

.search-box {
    box-sizing: border-box;
    width: 272px;
    height: 31px;
    display: flex;
    align-items: center;
    padding: 0 11px 0 8px;
    background-color: #f3f3f3;
}

.cortana {
    box-sizing: border-box;
    width: 16px;
    height: 16px;
    border: 2px solid #222;
    border-radius: 50%;
}

.search-text {
    margin-left: 7px;
    font-size: 11.2px;
    color: #555;
}

.mic {
    margin-left: auto;
}

.task-view {
    margin-left: 13px;
}

.task-icons {
    display: flex;
    align-items: center;
    gap: 18.8px;
    margin-left: 21px;
}

.task-running {
    box-shadow: 0 13px 0 -11px #9fb4cc;
}

.task-active {
    width: 37px;
    height: 31px;
    margin-left: -8px;
    display: flex;
    align-items: center;
    justify-content: center;
    background-color: #4c3a50;
    box-shadow: inset 0 -2px 0 #9fb4cc;
}

.tray {
    flex: 1;
    display: flex;
    align-items: center;
    padding-left: 190px;
}

.tray-chevron { margin-left: 17px; }
.tray-battery { margin-left: 15px; }
.tray-wifi { margin-left: 13px; }

.clock {
    width: 56px;
    margin-left: 6px;
    display: flex;
    flex-direction: column;
    align-items: center;
    line-height: 14px;
    font-size: 10px;
}

.notif {
    margin-left: 5px;
    position: relative;
}

.notif-count {
    position: absolute;
    left: 7px;
    top: 4px;
    width: 12px;
    height: 12px;
    line-height: 12px;
    border-radius: 50%;
    text-align: center;
    font-size: 9px;
    background-color: #3a3a3a;
    color: #eee;
}

/* pager dots */
.pager {
    height: 680px;
    box-sizing: border-box;
    padding: 602px 0 0 284px;
    display: flex;
    gap: 38px;
}

.dot {
    width: 17px;
    height: 17px;
    border-radius: 50%;
    background-color: #8a8a8a;
}

.dot-on {
    background-color: #f4f4f4;
}

/* android nav */
.nav-bar {
    height: 130px;
    box-sizing: border-box;
    padding-top: 49px;
    display: flex;
    align-items: flex-start;
    background-color: #fff;
}

.nav-square {
    width: 32px;
    height: 32px;
    margin-left: 300px;
    border-radius: 1px;
    background-color: #6b6b6b;
}

.nav-home {
    width: 49px;
    height: 49px;
    margin: -8px 0 0 184px;
    box-sizing: border-box;
    border: 4px solid #6b6b6b;
    border-radius: 50%;
    display: flex;
    align-items: center;
    justify-content: center;
}

.nav-home-dot {
    width: 33px;
    height: 33px;
    border-radius: 50%;
    background-color: #6b6b6b;
}

.nav-back {
    margin: -2px 0 0 180px;
}
```
